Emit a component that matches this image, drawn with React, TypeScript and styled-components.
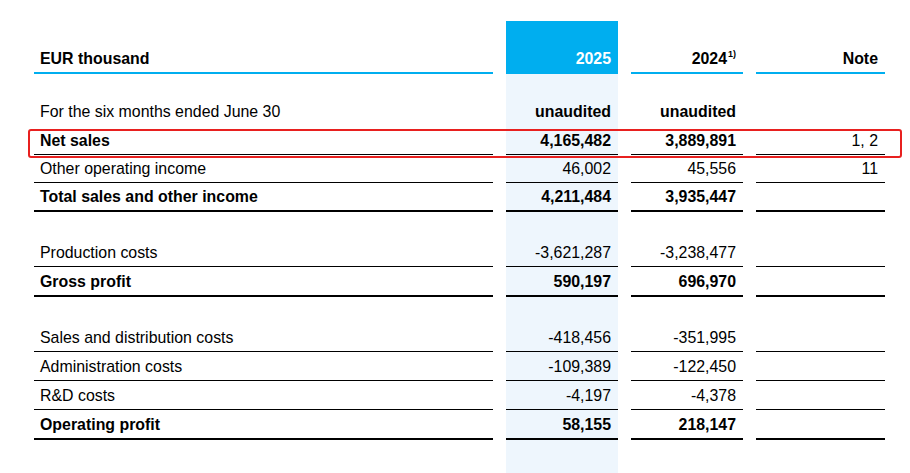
import { Fragment } from "react";
import styled, { createGlobalStyle } from "styled-components";

const GlobalStyle = createGlobalStyle`
  body {
    margin: 0;
    background: #ffffff;
    color: #000000;
    font-family: "Liberation Sans", Arial, sans-serif;
  }
`;

const colors = {
  blue: "#00aeef",
  paleBlue: "#eef6fd",
  red: "#e8201f",
  ink: "#000000",
};

type Col = "label" | "cur" | "prev" | "note";
type Rule = "none" | "thin" | "thick";

const Page = styled.div`
  position: relative;
  height: 473px;
  padding: 21px 0 0 34px;
  box-sizing: border-box;
  overflow: hidden;
`;

const Table = styled.div`
  display: grid;
  grid-template-columns: 459px 112px 112px 129px;
  column-gap: 13px;
  font-size: 15.9px;
  line-height: 18px;
`;

const HeadCell = styled.div<{ $col: Col; $highlight?: boolean }>`
  box-sizing: border-box;
  height: 53px;
  display: flex;
  align-items: flex-end;
  justify-content: ${(p) => (p.$col === "label" ? "flex-start" : "flex-end")};
  padding: 0 7px 4px 6px;
  font-weight: 700;
  color: ${(p) => (p.$highlight ? "#ffffff" : colors.ink)};
  background: ${(p) => (p.$highlight ? colors.blue : "transparent")};
  border-bottom: 2px solid ${colors.blue};
`;

const Cell = styled.div<{ $col: Col; $rule: Rule; $bold?: boolean; $h: number }>`
  box-sizing: border-box;
  height: ${(p) => p.$h}px;
  display: flex;
  align-items: flex-end;
  justify-content: ${(p) => (p.$col === "label" ? "flex-start" : "flex-end")};
  padding: 0 7px 4px 6px;
  font-weight: ${(p) => (p.$bold ? 700 : 400)};
  white-space: nowrap;
  background: ${(p) => (p.$col === "cur" ? colors.paleBlue : "transparent")};
  border-bottom: ${(p) =>
    p.$rule === "thick"
      ? `2px solid ${colors.ink}`
      : p.$rule === "thin"
      ? `1px solid ${colors.ink}`
      : "1px solid transparent"};
`;

const Spacer = styled.div<{ $col: Col; $h: number }>`
  height: ${(p) => p.$h}px;
  background: ${(p) => (p.$col === "cur" ? colors.paleBlue : "transparent")};
`;

const Sup = styled.sup`
  font-size: 9px;
  line-height: 0;
  vertical-align: 7px;
  margin-left: 1px;
`;

const Highlight = styled.div`
  position: absolute;
  top: 129px;
  left: 28px;
  width: 874px;
  height: 29px;
  box-sizing: border-box;
  border: 2px solid ${colors.red};
  border-radius: 3px;
  pointer-events: none;
`;

type Line =
  | { kind: "gap"; h: number }
  | {
      kind: "row";
      label: string;
      cur: string;
      prev: string;
      note?: string;
      bold?: "all" | "values";
      rule: Rule;
      h?: number;
    };

const lines: Line[] = [
  { kind: "gap", h: 23 },
  { kind: "row", label: "For the six months ended June 30", cur: "unaudited", prev: "unaudited", bold: "values", rule: "none" },
  { kind: "row", label: "Net sales", cur: "4,165,482", prev: "3,889,891", note: "1, 2", bold: "all", rule: "thin" },
  { kind: "row", label: "Other operating income", cur: "46,002", prev: "45,556", note: "11", rule: "thin", h: 28 },
  { kind: "row", label: "Total sales and other income", cur: "4,211,484", prev: "3,935,447", bold: "all", rule: "thick", h: 29 },
  { kind: "gap", h: 26 },
  { kind: "row", label: "Production costs", cur: "-3,621,287", prev: "-3,238,477", rule: "thin" },
  { kind: "row", label: "Gross profit", cur: "590,197", prev: "696,970", bold: "all", rule: "thick" },
  { kind: "gap", h: 26 },
  { kind: "row", label: "Sales and distribution costs", cur: "-418,456", prev: "-351,995", rule: "thin" },
  { kind: "row", label: "Administration costs", cur: "-109,389", prev: "-122,450", rule: "thin" },
  { kind: "row", label: "R&D costs", cur: "-4,197", prev: "-4,378", rule: "thin" },
  { kind: "row", label: "Operating profit", cur: "58,155", prev: "218,147", bold: "all", rule: "thick" },
  { kind: "gap", h: 40 },
];

const cols: Col[] = ["label", "cur", "prev", "note"];

export default function App() {
  return (
    <>
      <GlobalStyle />
      <Page>
        <Table>
          <HeadCell $col="label">EUR thousand</HeadCell>
          <HeadCell $col="cur" $highlight>
            2025
          </HeadCell>
          <HeadCell $col="prev">
            <span>
              2024<Sup>1)</Sup>
            </span>
          </HeadCell>
          <HeadCell $col="note">Note</HeadCell>

          {lines.map((line, i) => {
            if (line.kind === "gap") {
              return (
                <Fragment key={i}>
                  {cols.map((c) => (
                    <Spacer key={c} $col={c} $h={line.h} />
                  ))}
                </Fragment>
              );
            }
            const h = line.h ?? (line.rule === "thick" ? 30 : 29);
            return (
              <Fragment key={i}>
                <Cell $col="label" $rule={line.rule} $bold={line.bold === "all"} $h={h}>
                  <span>{line.label}</span>
                </Cell>
                <Cell $col="cur" $rule={line.rule} $bold={!!line.bold} $h={h}>
                  <span>{line.cur}</span>
                </Cell>
                <Cell $col="prev" $rule={line.rule} $bold={!!line.bold} $h={h}>
                  <span>{line.prev}</span>
                </Cell>
                <Cell $col="note" $rule={line.rule} $h={h}>
                  <span>{line.note ?? ""}</span>
                </Cell>
              </Fragment>
            );
          })}
        </Table>
        <Highlight />
      </Page>
    </>
  );
}
